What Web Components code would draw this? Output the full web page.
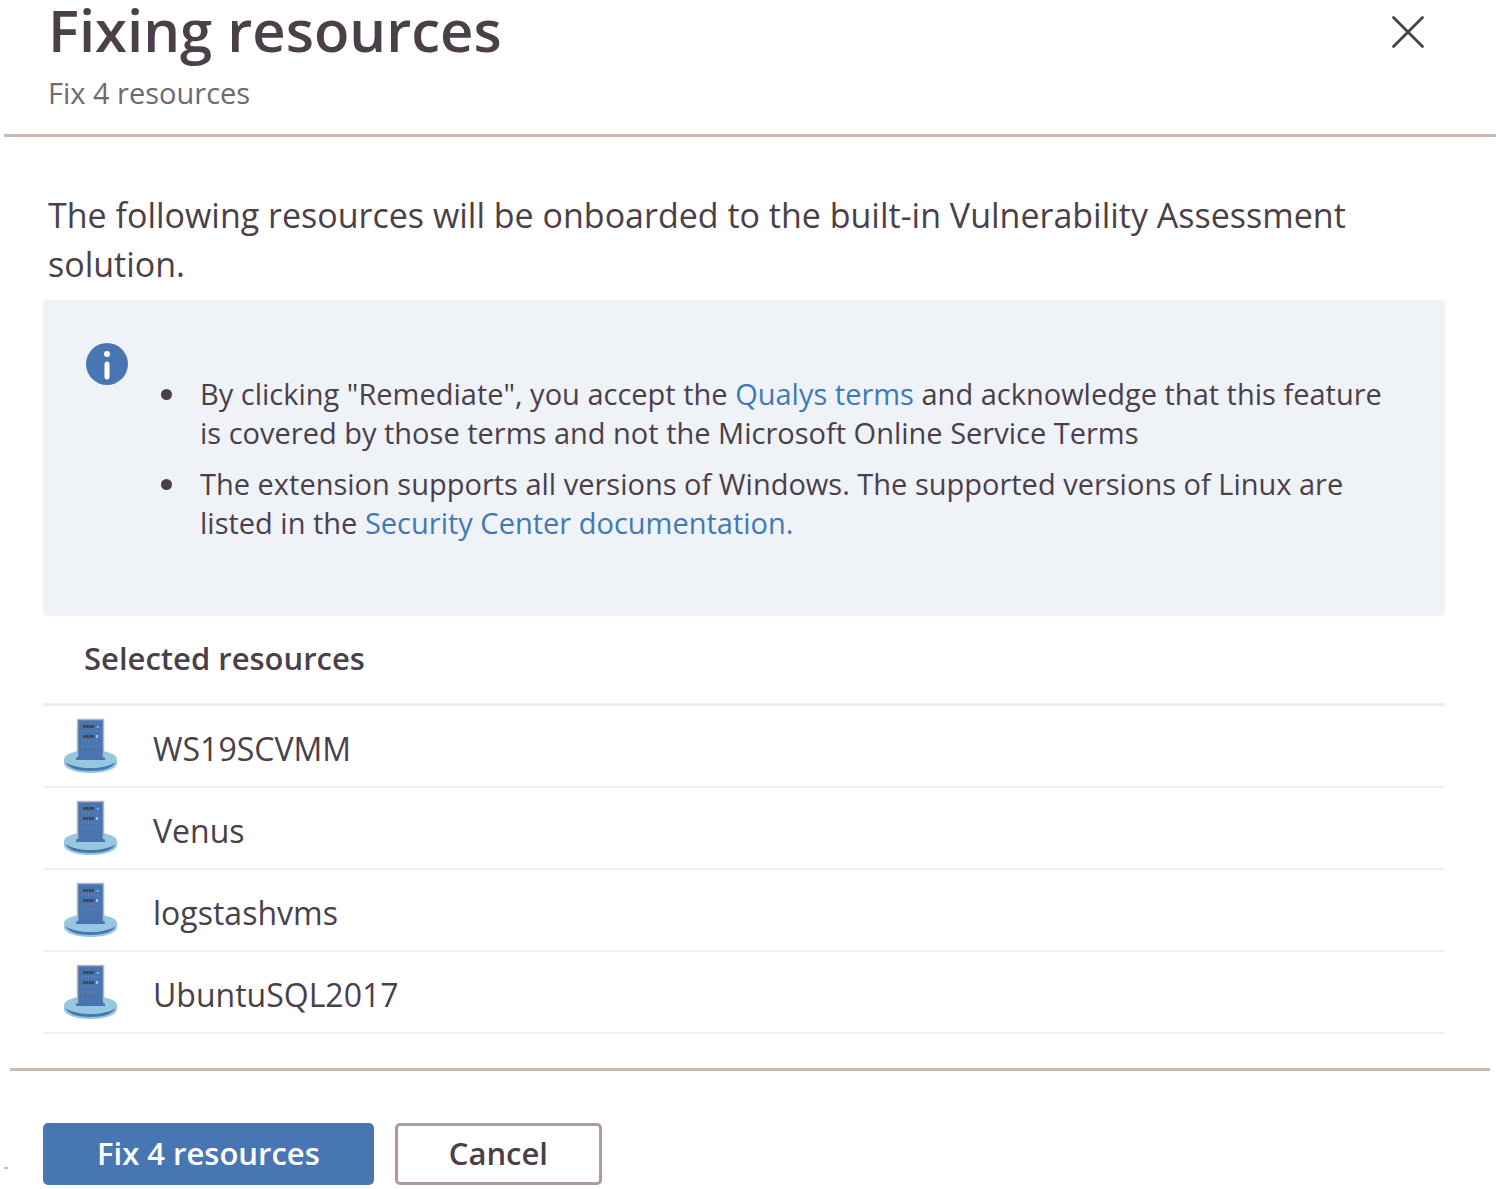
<!DOCTYPE html>
<html lang="en">
<head>
<meta charset="utf-8">
<title>Fixing resources</title>
<style>
  html { background: #fff; }
  body {
    margin: 0;
    font-family: "Open Sans", "Noto Sans", sans-serif;
    color: #4b3f49;
    --accent: #4876b2;
    --link: #4179b6;
    --rule: #c9b9b0;
    --soft-rule: #f0f1f4;
  }
</style>
</head>
<body>
<fix-panel></fix-panel>

<template id="t-panel">
  <style>
    :host { display: block; }
    main { padding: 54px 55px 0 43px; }
    .intro { margin: 0 0 11px; padding-left: 5px; font-size: 34px; line-height: 49px; }
    ul { list-style: none; margin: 0; padding: 0 0 0 48px; display: flex; flex-direction: column; gap: 12px; }
    li::before { content: ""; display: inline-block; width: 11px; height: 11px; margin: 0 28px 0 -39px; border-radius: 50%; background: currentColor; vertical-align: 5px; }
    a { color: var(--link); text-decoration: none; }
  </style>
  <panel-header heading="Fixing resources" subheading="Fix 4 resources"></panel-header>
  <main>
    <p class="intro">The following resources will be onboarded to the built-in Vulnerability Assessment solution.</p>
    <info-box>
      <ul>
        <li>By clicking "Remediate", you accept the <a href="#terms">Qualys terms</a> and acknowledge that this feature is covered by those terms and not the Microsoft Online Service Terms</li>
        <li>The extension supports all versions of Windows. The supported versions of Linux are listed in the <a href="#docs">Security Center documentation.</a></li>
      </ul>
    </info-box>
    <resource-list heading="Selected resources">
      <resource-item>WS19SCVMM</resource-item>
      <resource-item>Venus</resource-item>
      <resource-item>logstashvms</resource-item>
      <resource-item>UbuntuSQL2017</resource-item>
    </resource-list>
  </main>
  <panel-footer>
    <action-button kind="primary">Fix 4 resources</action-button>
    <action-button>Cancel</action-button>
  </panel-footer>
</template>

<template id="t-header">
  <style>
    :host { display: block; margin: 0 4px; border-bottom: 3px solid var(--rule); }
    header { display: flex; justify-content: space-between; align-items: flex-start; padding: 0 68px 21px 44px; }
    h1 { margin: 0 0 13px; font-size: 58px; line-height: 60px; font-weight: 600; }
    p { margin: 0; font-size: 29px; line-height: 40px; color: #716871; }
    button { display: flex; margin: 12px 0 0; padding: 0; border: 0; background: none; color: inherit; cursor: pointer; }
  </style>
  <header>
    <div>
      <h1></h1>
      <p></p>
    </div>
    <button type="button" aria-label="Close">
      <svg width="40" height="40" viewBox="0 0 40 40" fill="none" stroke="currentColor" stroke-width="2.8" stroke-linecap="round"><path d="M5.500 5.500L34.500 34.500M34.500 5.500L5.500 34.500"/></svg>
    </button>
  </header>
</template>

<template id="t-info">
  <style>
    :host { display: flex; align-items: flex-start; gap: 24px; padding: 43px 43px 74px; background: #eff3f8; border-radius: 4px; font-size: 29px; line-height: 39px; }
    svg { flex: none; }
    .content { flex: 1; padding-top: 31px; }
  </style>
  <svg width="42" height="42" viewBox="0 0 42 42" role="img" aria-label="Information">
    <circle cx="21" cy="21" r="21" fill="#4876b2"/>
    <circle cx="21" cy="11" r="3" fill="#fff"/>
    <path d="M21 21V34" stroke="#fff" stroke-width="5" stroke-linecap="round"/>
  </svg>
  <div class="content"><slot></slot></div>
</template>

<template id="t-list">
  <style>
    :host { display: block; }
    h2 { margin: 0; padding: 18px 41px 21px; font-size: 31px; line-height: 48px; font-weight: 600; border-bottom: 3px solid #f6ece4; }
  </style>
  <h2></h2>
  <div role="list"><slot></slot></div>
</template>

<template id="t-item">
  <style>
    :host { display: flex; align-items: center; gap: 35px; height: 80px; padding-left: 20px; border-bottom: 2px solid var(--soft-rule); font-size: 32px; line-height: 44px; }
    span { padding-top: 5px; }
  </style>
  <svg width="55" height="56" viewBox="0 0 55 56" aria-hidden="true">
    <path d="M1 42v3c0 6 12 10 26.500 10S54 51 54 45v-3z" fill="#96c7e1"/>
    <path d="M4 44c3 5 13 7.500 23.500 7.500S48 49 51 44" fill="none" stroke="#4876b2" stroke-width="3"/>
    <ellipse cx="27.500" cy="41" rx="26.500" ry="9" fill="#96c7e1"/>
    <path d="M14 1H41V39l1 1v2H13v-2l1-1z" fill="#4876b2"/>
    <path d="M14.500 39V1.500H40.500V39" fill="none" stroke="#bfb4b4" stroke-width="1.500"/>
    <path d="M20 8.500H31M20 18.500H31" stroke="#4b3f49" stroke-width="3" stroke-dasharray="2.500 .5"/>
    <path d="M19 13H37M19 23H36M20 28H37" stroke="#a78078" stroke-width="1" stroke-dasharray="1 2"/>
    <path d="M17 32H38M18 39H38" stroke="#655260" stroke-width="1" stroke-dasharray="1 4"/>
    <path d="M34 8h1.500v2H34zM33 17h2v3h-2z" fill="#96c7e1"/>
  </svg>
  <span><slot></slot></span>
</template>

<template id="t-footer">
  <style>
    :host { display: block; padding-top: 34px; }
    hr { margin: 0 10px; border: 0; height: 3px; background: var(--rule); }
    footer { display: flex; gap: 21px; padding: 52px 43px 4px 4px; }
    .mark { align-self: flex-end; width: 4px; height: 2px; margin: 0 14px 16px 0; background: var(--rule); }
  </style>
  <hr>
  <footer><span class="mark"></span><slot></slot></footer>
</template>

<template id="t-button">
  <style>
    :host { display: block; }
    button { display: block; height: 62px; margin: 0; padding: 0 51px 2px; border: 3px solid #b39a94; border-radius: 5px; background: #fff; color: inherit; font: 600 31px/54px "Open Sans", "Noto Sans", sans-serif; cursor: pointer; }
    :host([kind="primary"]) button { border-color: var(--accent); background: var(--accent); color: #fff; }
  </style>
  <button type="button"><slot></slot></button>
</template>

<script>
  class TemplateElement extends HTMLElement {
    constructor() {
      super();
      this.attachShadow({ mode: "open" })
        .append(document.getElementById(this.constructor.template).content.cloneNode(true));
    }
    fill(selector, attribute) {
      this.shadowRoot.querySelector(selector).textContent = this.getAttribute(attribute) || "";
    }
  }
  class PanelHeader extends TemplateElement {
    static template = "t-header";
    connectedCallback() { this.fill("h1", "heading"); this.fill("p", "subheading"); }
  }
  class InfoBox extends TemplateElement { static template = "t-info"; }
  class ResourceItem extends TemplateElement {
    static template = "t-item";
    connectedCallback() { this.setAttribute("role", "listitem"); }
  }
  class ResourceList extends TemplateElement {
    static template = "t-list";
    connectedCallback() { this.fill("h2", "heading"); }
  }
  class ActionButton extends TemplateElement { static template = "t-button"; }
  class PanelFooter extends TemplateElement { static template = "t-footer"; }
  class FixPanel extends TemplateElement { static template = "t-panel"; }

  customElements.define("panel-header", PanelHeader);
  customElements.define("info-box", InfoBox);
  customElements.define("resource-item", ResourceItem);
  customElements.define("resource-list", ResourceList);
  customElements.define("action-button", ActionButton);
  customElements.define("panel-footer", PanelFooter);
  customElements.define("fix-panel", FixPanel);
</script>
</body>
</html>
